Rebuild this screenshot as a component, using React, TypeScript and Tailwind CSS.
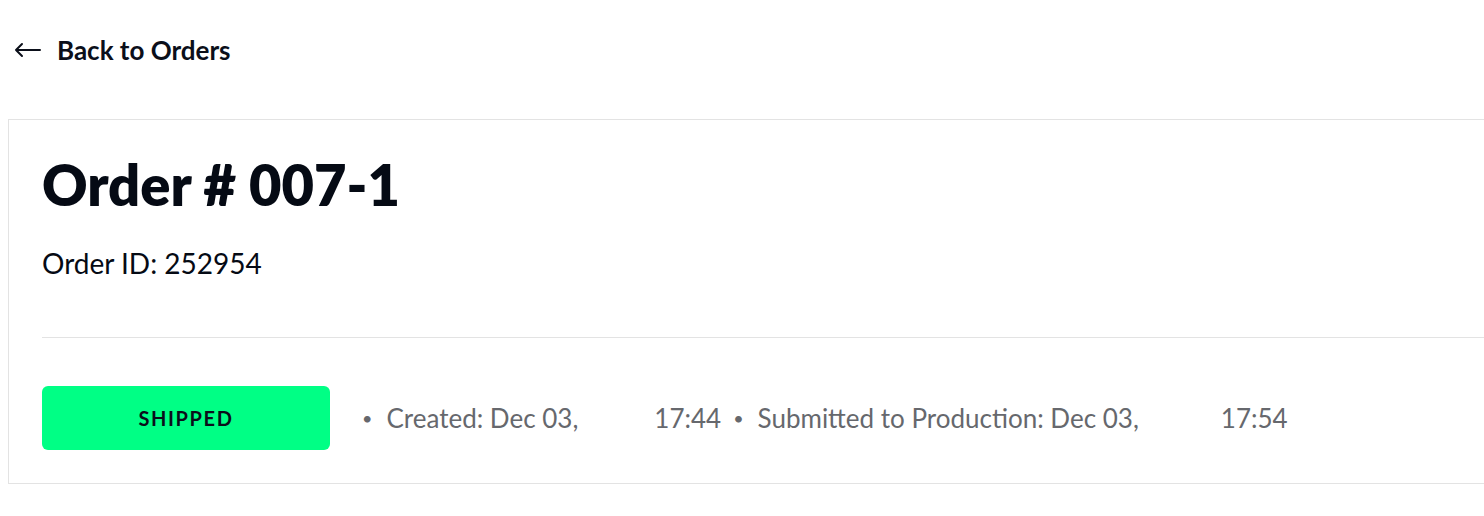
import React from 'react';

export default function App() {
  return (
    <div className="w-[1484px] h-[516px] overflow-hidden bg-white font-['Lato',sans-serif]">
      {/* Back link */}
      <div className="h-[119px] pl-[14px] flex items-start pt-[34px]">
        <button className="flex items-center gap-[16px] text-[26px] font-bold text-[#0b0f1a] leading-[32px]">
          <svg width="27" height="16" viewBox="0 0 27 16" fill="none" stroke="#0b0f1a" strokeWidth="2" strokeLinecap="round" strokeLinejoin="round">
            <path d="M26 8H2M8 2L2 8l6 6" />
          </svg>
          Back to Orders
        </button>
      </div>

      {/* Order card */}
      <div className="ml-[8px] w-[1520px] h-[365px] border border-[#e3e3e3] pl-[33px]">
        <h1 className="pt-[31px] text-[56px] font-extrabold leading-[68px] text-[#050a14]">Order # 007-1</h1>
        <p className="mt-[27px] text-[28px] leading-[34px] text-[#050a14]">Order ID: 252954</p>
        <div className="mt-[57px] border-t border-[#e3e3e3]" />
        <div className="mt-[48px] flex items-center">
          <span className="w-[288px] h-[64px] rounded-[6px] bg-[#00ff85] flex items-center justify-center text-[20px] font-bold tracking-[0.08em] text-[#0b0f1a]">
            SHIPPED
          </span>
          <div className="ml-[32px] flex items-center text-[26px] text-[#66686d]">
            <span className="text-[18px]">•</span>
            <span className="ml-[14px]">Created: Dec 03,</span>
            <span className="ml-[76px]">17:44</span>
            <span className="ml-[12px] text-[18px]">•</span>
            <span className="ml-[14px]">Submitted to Production: Dec 03,</span>
            <span className="ml-[82px]">17:54</span>
          </div>
        </div>
      </div>
    </div>
  );
}
